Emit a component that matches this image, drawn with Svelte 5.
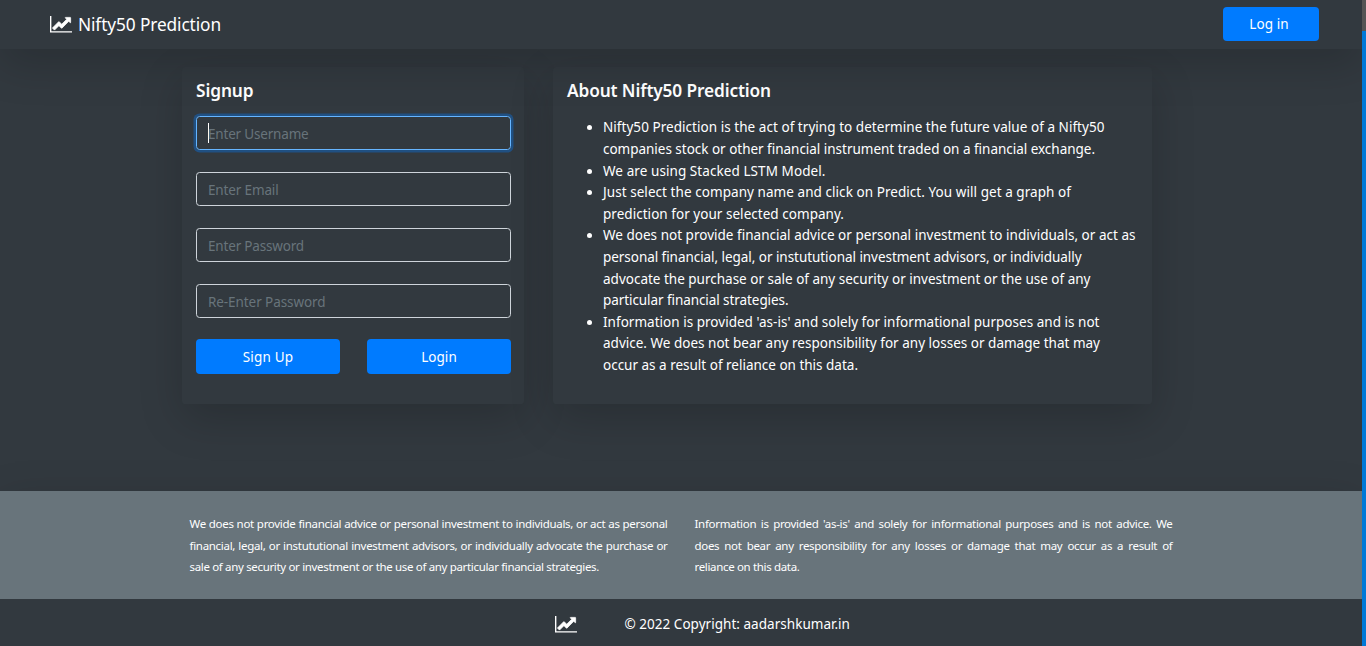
<script>
  // Spreads the letters of a line so that it takes the given width.
  function fit(node, width) {
    const natural = node.getBoundingClientRect().width;
    const count = node.textContent.length;
    node.style.letterSpacing = `${(width - natural) / count}px`;
  }

  const fields = [
    { name: 'username', label: 'Enter Username', width: 100.5 },
    { name: 'email', label: 'Enter Email', width: 70.5 },
    { name: 'password', label: 'Enter Password', width: 96 },
    { name: 'confirm', label: 'Re-Enter Password', width: 117.5 }
  ];

  const items = [
    [
      ['Nifty50 Prediction is the act of trying to determine the future value of a Nifty50', 501.5],
      ['companies stock or other financial instrument traded on a financial exchange.', 492]
    ],
    [['We are using Stacked LSTM Model.', 222.5]],
    [
      ['Just select the company name and click on Predict. You will get a graph of', 468],
      ['prediction for your selected company.', 241]
    ],
    [
      ['We does not provide financial advice or personal investment to individuals, or act as', 532.5],
      ['personal financial, legal, or instututional investment advisors, or individually', 478.5],
      ['advocate the purchase or sale of any security or investment or the use of any', 487.5],
      ['particular financial strategies.', 185.5]
    ],
    [
      ["Information is provided 'as-is' and solely for informational purposes and is not", 496.5],
      ['advice. We does not bear any responsibility for any losses or damage that may', 497],
      ['occur as a result of reliance on this data.', 255]
    ]
  ];

  const notes = [
    {
      full: [
        'We does not provide financial advice or personal investment to individuals, or act as personal',
        'financial, legal, or instututional investment advisors, or individually advocate the purchase or'
      ],
      last: ['sale of any security or investment or the use of any particular financial strategies.', 409.5]
    },
    {
      full: [
        "Information is provided 'as-is' and solely for informational purposes and is not advice. We",
        'does not bear any responsibility for any losses or damage that may occur as a result of'
      ],
      last: ['reliance on this data.', 105]
    }
  ];
</script>

{#snippet chart()}
  <svg class="chart" viewBox="0 0 2048 1536" aria-hidden="true">
    <path fill="currentColor" d="M2048 1408v128H0V0h128v1408z" />
    <path
      fill="currentColor"
      stroke="currentColor"
      stroke-width="70"
      d="M1920 160v435q0 21-19.500 29.500t-35.500-7.500l-121-121-633 633q-10 10-23 10t-23-10l-233-233-416 416-192-192 585-585q10-10 23-10t23 10l233 233 464-464-121-121q-16-16-7.500-35.500t29.500-19.500h435q14 0 23 9t9 23z"
    />
  </svg>
{/snippet}

<div class="screen">
  <div class="page">
    <nav>
      <a class="brand" href="#home">{@render chart()}<span use:fit={143}>Nifty50 Prediction</span></a>
      <button class="login"><span use:fit={39.5}>Log in</span></button>
    </nav>

    <main>
      <section class="card signup">
        <h5><span use:fit={57.5}>Signup</span></h5>
        {#each fields as field, i}
          <label class="field" class:focused={i === 0}>
            <span use:fit={field.width}>{field.label}</span>
          </label>
        {/each}
        <div class="actions">
          <button><span use:fit={50.5}>Sign Up</span></button>
          <button><span use:fit={35.5}>Login</span></button>
        </div>
      </section>

      <section class="card about">
        <h5><span use:fit={204}>About Nifty50 Prediction</span></h5>
        <ul>
          {#each items as lines}
            <li>
              {#each lines as [text, width]}
                <div><span use:fit={width}>{text}</span></div>
              {/each}
            </li>
          {/each}
        </ul>
      </section>
    </main>

    <footer>
      <div class="notes">
        {#each notes as note}
          <div class="note">
            {#each note.full as text}<div class="full">{text}</div>{/each}
            <div><span use:fit={note.last[1]}>{note.last[0]}</span></div>
          </div>
        {/each}
      </div>
      <div class="copyright">
        {@render chart()}
        <span use:fit={225.5}>© 2022 Copyright: aadarshkumar.in</span>
      </div>
    </footer>
  </div>
  <div class="scrollbar"><div class="thumb"></div></div>
</div>

<style>
  :global(body) {
    margin: 0;
    background: #32393f;
  }
  .screen {
    display: flex;
    height: 646px;
    overflow: hidden;
    font-family: 'Noto Sans', 'Open Sans', sans-serif;
    font-size: 13.5px;
    line-height: 21.6px;
    color: #fff;
    background: #32393f;
  }
  .screen * {
    box-sizing: border-box;
  }
  span {
    white-space: nowrap;
  }
  .page {
    width: 1362px;
    display: flex;
    flex-direction: column;
    overflow: hidden;
  }
  nav {
    position: relative;
    z-index: 2;
    height: 49px;
    flex: none;
    display: flex;
    align-items: center;
    justify-content: space-between;
    padding: 0 43px 0 50px;
    background: #32393f;
    box-shadow: 0 14.4px 43.2px rgba(0, 0, 0, 0.175);
  }
  .brand {
    display: flex;
    align-items: center;
    gap: 6px;
    color: #fff;
    text-decoration: none;
    font-size: 17.3px;
  }
  .chart {
    display: block;
    width: 22px;
    height: 16.5px;
    flex: none;
  }
  button {
    height: 35px;
    padding: 2px 0 0;
    border: 0;
    border-radius: 4px;
    background: #007bff;
    color: #fff;
    font: inherit;
  }
  .login {
    width: 96px;
    height: 34px;
    margin-bottom: 1px;
    padding: 1px 4px 0 0;
  }
  main {
    height: 442px;
    flex: none;
    display: flex;
    align-items: flex-start;
    gap: 29px;
    padding: 18px 0 0 182px;
  }
  .card {
    height: 337px;
    padding: 14px 13px 0 14px;
    border-radius: 3.6px;
    background: #32393f;
    box-shadow: 0 14.4px 43.2px rgba(0, 0, 0, 0.175);
  }
  .signup {
    width: 342px;
  }
  .about {
    width: 599px;
  }
  h5 {
    margin: 0;
    height: 35px;
    font-size: 17.3px;
    font-weight: 600;
    line-height: 20px;
  }
  .field {
    display: flex;
    align-items: center;
    height: 34px;
    margin-bottom: 22px;
    padding: 2px 11px 0;
    border: 1px solid #ced4da;
    border-radius: 3.6px;
    color: #68747b;
  }
  .focused {
    border-color: #66b5ff;
    box-shadow: 0 0 0 2.5px rgba(0, 123, 255, 0.35);
  }
  .focused::before {
    content: '';
    width: 1px;
    height: 20px;
    margin: -2px -1px 0 0;
    background: #fff;
  }
  .field span {
    padding-top: 1px;
  }
  .actions {
    display: flex;
    justify-content: space-between;
    margin-top: -1px;
  }
  .actions button {
    width: 144px;
  }
  ul {
    margin: 0;
    padding: 1.4px 0 0 36px;
  }
  footer {
    flex: none;
    height: 155px;
    box-shadow: 0 14.4px 43.2px rgba(0, 0, 0, 0.175);
  }
  .notes {
    height: 108px;
    display: flex;
    gap: 27px;
    padding: 22px 0 0 189.5px;
    background: #68747b;
    font-size: 11.5px;
  }
  .note {
    width: 478px;
  }
  .full {
    white-space: nowrap;
    text-align: justify;
    text-align-last: justify;
    letter-spacing: -0.3px;
  }
  .copyright {
    height: 47px;
    display: flex;
    align-items: center;
    gap: 47.5px;
    padding: 4px 0 0 555px;
    background: #32393f;
  }
  .scrollbar {
    width: 4px;
    padding-top: 31px;
    background: #555;
  }
  .thumb {
    height: 615px;
    background: #0078d7;
  }
</style>
